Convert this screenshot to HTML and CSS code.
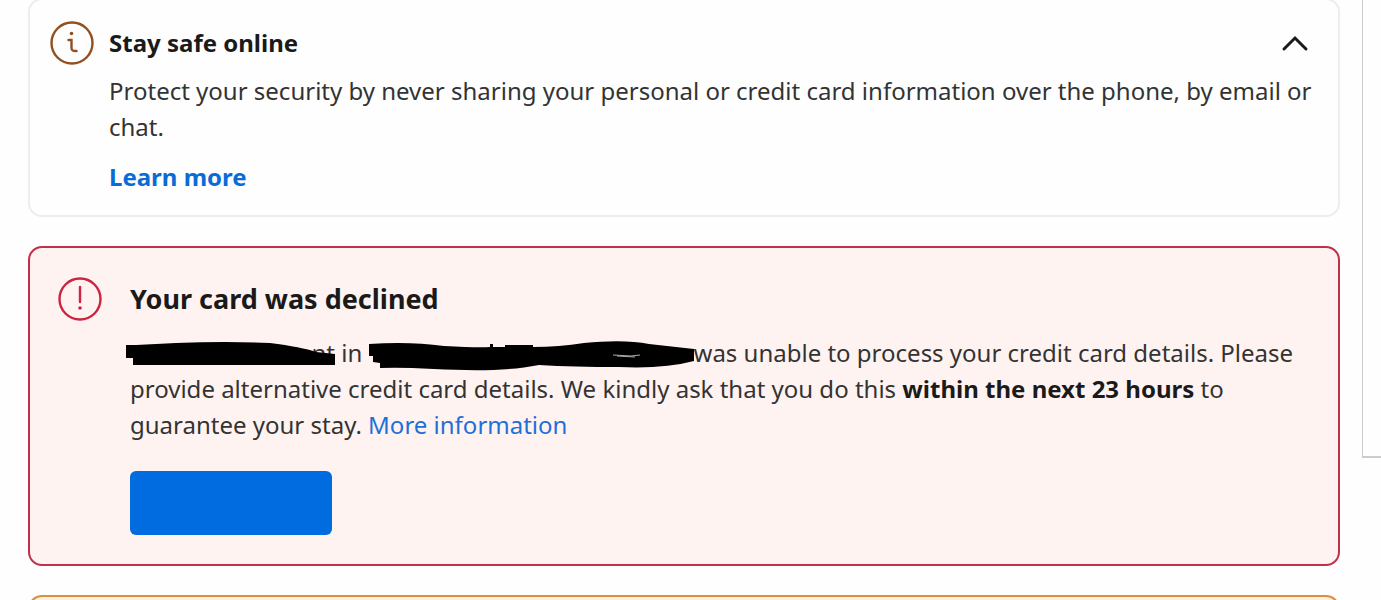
FILE: index.html
```
<!DOCTYPE html>
<html lang="en">
<head>
    <meta charset="UTF-8">
    <meta name="viewport" content="width=device-width, initial-scale=1.0">
    <title>Booking details</title>
    <link rel="stylesheet" href="styles.css">
</head>
<body>
    <div class="page">
        <main class="messages">
            <section class="card card-info">
                <svg class="icon icon-info" viewBox="0 0 44 44" aria-hidden="true">
                    <circle cx="22" cy="22" r="20.5"/>
                    <path d="M18.5 19H21.5V27Q21.5 30.5 26.5 30"/>
                    <circle class="dot" cx="21.5" cy="12.5" r="1.8"/>
                </svg>
                <div class="card-body">
                    <div class="card-header">
                        <h2>Stay safe online</h2>
                        <button class="toggle" type="button" aria-label="Collapse" aria-expanded="true">
                            <svg viewBox="0 0 28 18" aria-hidden="true"><path d="M3 15L14 4L25 15"/></svg>
                        </button>
                    </div>
                    <p>Protect your security by never sharing your personal or credit card information over the phone, by email or chat.</p>
                    <a class="learn-more" href="#">Learn more</a>
                </div>
            </section>

            <section class="card card-error">
                <svg class="icon icon-error" viewBox="0 0 44 44" aria-hidden="true">
                    <circle cx="22" cy="22" r="20.5"/>
                    <path d="M22 10V25"/>
                    <circle class="dot" cx="22" cy="31" r="1.8"/>
                </svg>
                <div class="card-body">
                    <h2 class="title-large">Your card was declined</h2>
                    <p><span class="hidden-name">nt<svg viewBox="0 0 209 28" aria-hidden="true"><path d="M0 4H10L50 2Q100 0 144 2Q176 6 190 11L209 13V24H7V17H0Z"/></svg></span> in <span class="hidden-place"><svg viewBox="0 0 325 28" aria-hidden="true"><path d="M0 3Q40 0 75 5Q110 7 121 6V3H124V6H136V4H164V6Q190 6 215 2Q255-2 280 3L325 8V20Q295 28 250 26Q205 26 170 24C140 30 105 30 65 28Q30 26 11 27V22L4 21V15H0Z"/><path class="scratch" d="M244 14L262 15L271 14M248 15L266 16"/></svg></span>was unable to process your credit card details. Please provide alternative credit card details. We kindly ask that you do this <strong>within the next 23 hours</strong> to guarantee your stay. <a href="#">More information</a></p>
                    <button class="btn-primary" type="button" aria-label="Update card"></button>
                </div>
            </section>

            <section class="card card-warning"></section>
        </main>
        <aside class="sidebar"></aside>
    </div>
</body>
</html>
```
FILE: styles.css
```
* {
    box-sizing: border-box;
}
body {
    margin: 0;
    height: 100vh;
    overflow: hidden;
    font-family: 'Segoe UI', 'Noto Sans', sans-serif;
    font-size: 24px;
    line-height: 36px;
    color: #333;
    background: #fefefe;
}
.page {
    display: flex;
    align-items: flex-start;
    gap: 22px;
    padding-left: 28px;
}
.messages {
    flex: 1;
    display: flex;
    flex-direction: column;
    gap: 29px;
    margin-top: -2px;
}
.card {
    display: flex;
    border: 2px solid #ededed;
    border-radius: 14px;
}
.card-body {
    flex: 1;
}
.card-info {
    gap: 15px;
    padding: 21px 20px 20px;
}
.card-error {
    gap: 28px;
    padding: 29px 28px;
    border-color: #c03048;
    background: #fff3f2;
}
.card-warning {
    min-height: 40px;
    border-color: #d98f45;
    background: #fff0d9;
}
h2 {
    margin: 0;
    font-size: 24px;
    font-weight: 700;
    color: #1a1a1a;
}
.title-large {
    font-size: 27px;
    margin: 4px 0 18px;
}
p {
    margin: 0;
}
strong {
    color: #1a1a1a;
}
a {
    color: #1f6fd8;
    text-decoration: none;
}
.icon {
    flex: none;
    width: 44px;
    height: 44px;
    fill: none;
    stroke-width: 2.4;
    stroke-linecap: round;
}
.icon-info {
    stroke: #92501f;
}
.icon-info .dot {
    fill: #92501f;
    stroke: none;
}
.icon-error {
    stroke: #cc2440;
}
.icon-error .dot {
    fill: #cc2440;
    stroke: none;
}
.card-header {
    display: flex;
    align-items: center;
    justify-content: space-between;
    padding: 4px 9px 12px 0;
}
.toggle {
    display: flex;
    padding: 0;
    border: none;
    background: none;
    cursor: pointer;
}
.toggle svg {
    width: 28px;
    height: 18px;
    fill: none;
    stroke: #1a1a1a;
    stroke-width: 3;
    stroke-linecap: round;
}
.learn-more {
    display: inline-block;
    margin-top: 14px;
    font-weight: 700;
    color: #0a6bd6;
}
.hidden-name,
.hidden-place {
    display: inline-block;
    position: relative;
    height: 36px;
    vertical-align: top;
    text-align: right;
}
.hidden-name {
    width: 209px;
    margin-left: -4px;
}
.hidden-place {
    width: 325px;
}
.hidden-name svg,
.hidden-place svg {
    position: absolute;
    top: 6px;
    left: 0;
    width: 100%;
    height: 28px;
    overflow: visible;
}
.scratch {
    fill: none;
    stroke: #aaa;
}
.btn-primary {
    display: block;
    width: 202px;
    height: 64px;
    margin-top: 28px;
    border: none;
    border-radius: 6px;
    background: #006ce0;
    cursor: pointer;
}
.sidebar {
    width: 19px;
    height: 458px;
    border: solid #ccc;
    border-width: 0 0 2px 1px;
}
```
